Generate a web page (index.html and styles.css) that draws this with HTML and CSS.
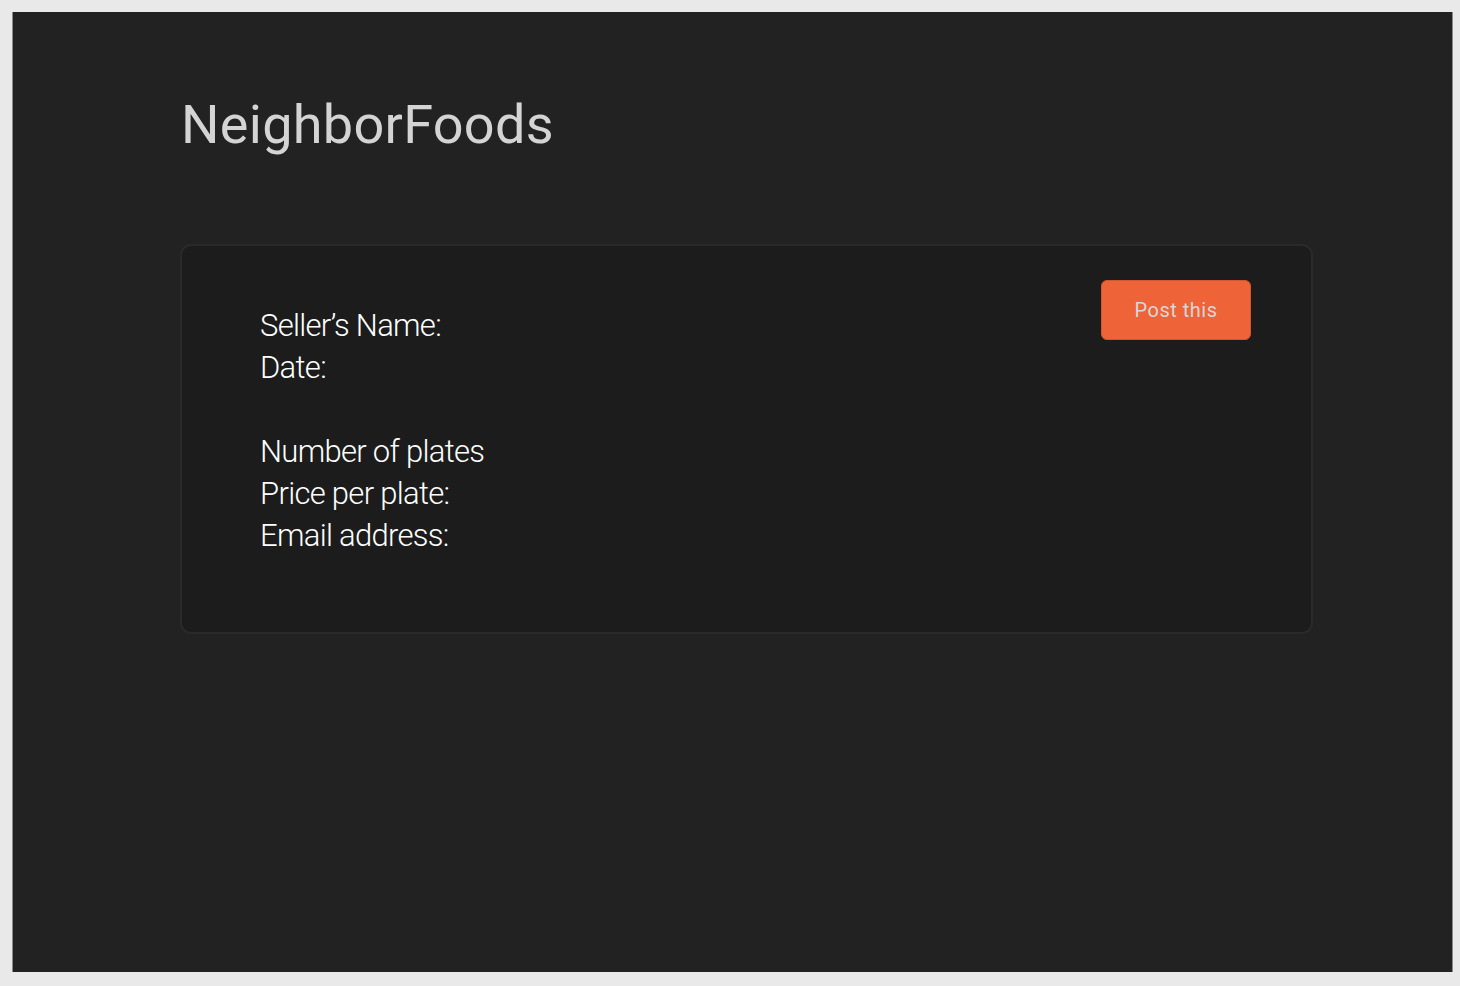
FILE: index.html
```html
<!DOCTYPE html>
<html>
<head>
<meta charset="utf-8">
<link rel="stylesheet" href="styles.css">
</head>
<body>
<main class="app">
  <h1 class="brand">NeighborFoods</h1>
  <section class="card">
    <div class="fields">
      <div class="field">Seller’s Name:</div>
      <div class="field">Date:</div>
      <div class="field spacer"></div>
      <div class="field">Number of plates</div>
      <div class="field">Price per plate:</div>
      <div class="field">Email address:</div>
    </div>
    <button class="post">Post this</button>
  </section>
</main>
</body>
</html>
```
FILE: styles.css
```css
html, body {
  margin: 0;
  padding: 0;
  background: #e9e9e9;
}
body {
  padding: 12px;
  font-family: Roboto, "Liberation Sans", sans-serif;
}
.app {
  box-sizing: border-box;
  width: 1441px;
  height: 960px;
  background: #222222;
  border-left: 1px solid #8a8a8a;
  border-right: 1px solid #8a8a8a;
  padding: 77px 139px 0 167px;
}
.brand {
  margin: 0 0 0 1px;
  font-weight: 400;
  font-size: 54px;
  line-height: 72px;
  color: #d4d4d4;
  letter-spacing: 0.3px;
}
.card {
  margin-top: 83px;
  box-sizing: border-box;
  height: 390px;
  background: #1c1c1c;
  border: 2px solid #2a2a2a;
  border-radius: 11px;
  display: flex;
  justify-content: space-between;
  align-items: flex-start;
  padding: 34px 60px 0 78px;
}
.fields {
  padding-top: 25px;
  color: #ffffff;
  font-weight: 300;
  font-size: 31px;
  line-height: 42px;
  letter-spacing: -0.7px;
}
.spacer {
  height: 42px;
}
.post {
  width: 150px;
  height: 60px;
  background: #ee6338;
  border: 1px solid #d4562f;
  border-radius: 6px;
  color: #d6d6d6;
  font-family: Roboto, "Liberation Sans", sans-serif;
  font-size: 20px;
  font-weight: 400;
  letter-spacing: 0.5px;
  padding: 0;
}
```
